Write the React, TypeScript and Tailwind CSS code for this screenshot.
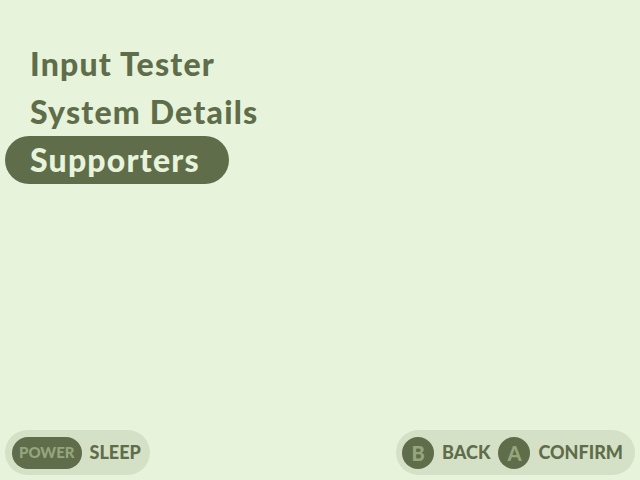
const items = ["Input Tester", "System Details", "Supporters"];
const selected = 2;

const font = { fontFamily: "Lato, 'Noto Sans', sans-serif" };

const Hint = ({ label, text }: { label: string; text: string }) => (
  <div className="flex items-center gap-[8px]">
    {label.length === 1 ? (
      <span className="flex h-8 w-8 items-center justify-center rounded-full bg-[#5f6d4a] text-[20px] font-black text-[#95a67d]">
        {label}
      </span>
    ) : (
      <span className="flex h-8 items-center rounded-full bg-[#5f6d4a] px-[7px] text-[15px] font-black text-[#95a67d]">
        {label}
      </span>
    )}
    <span className="text-[18px] font-black text-[#5f6d4a]">{text}</span>
  </div>
);

export default function App() {
  return (
    <div className="flex h-screen w-full flex-col bg-[#e7f4db]" style={font}>
      <div className="flex flex-col items-start pt-[40px] pl-[5px]">
        {items.map((item, i) => (
          <div
            key={item}
            className={
              "flex h-12 items-center rounded-full pl-[25px] pr-[29px] text-[32px] font-black leading-none tracking-[1.2px] " +
              (i === selected ? "bg-[#5f6d4a] text-[#e7f4db]" : "text-[#5f6d4a]")
            }
          >
            {item}
          </div>
        ))}
      </div>

      <div className="mt-auto flex items-center justify-between px-[5px] pb-[5px]">
        <div className="flex h-[45px] items-center rounded-full bg-[#d5e1c6] pl-[7px] pr-[9px]">
          <Hint label="POWER" text="SLEEP" />
        </div>
        <div className="flex h-[45px] items-center gap-[8px] rounded-full bg-[#d5e1c6] pl-[6px] pr-[12px]">
          <Hint label="B" text="BACK" />
          <Hint label="A" text="CONFIRM" />
        </div>
      </div>
    </div>
  );
}
